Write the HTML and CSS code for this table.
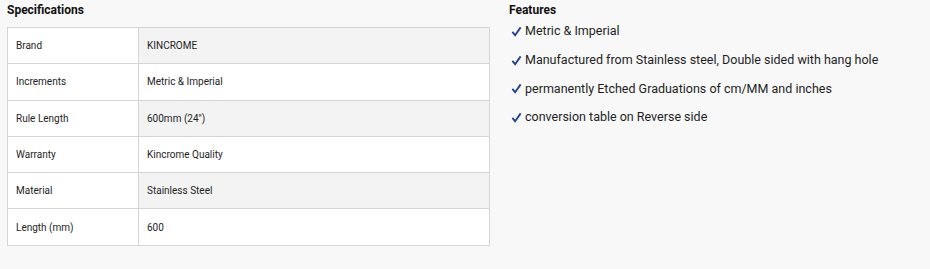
FILE: index.html
```html
<!DOCTYPE html>
<html lang="en">
<head>
    <meta charset="UTF-8">
    <meta name="viewport" content="width=device-width, initial-scale=1.0">
    <title>Product Specifications</title>
    <link rel="stylesheet" href="styles.css">
</head>
<body>
    <div class="product-info">
        <div class="specs">
            <h4 class="section-title">Specifications</h4>
            <table class="spec-table">
                <tr>
                    <td class="label">Brand</td>
                    <td class="value">KINCROME</td>
                </tr>
                <tr>
                    <td class="label">Increments</td>
                    <td class="value">Metric &amp; Imperial</td>
                </tr>
                <tr>
                    <td class="label">Rule Length</td>
                    <td class="value">600mm (24&quot;)</td>
                </tr>
                <tr>
                    <td class="label">Warranty</td>
                    <td class="value">Kincrome Quality</td>
                </tr>
                <tr>
                    <td class="label">Material</td>
                    <td class="value">Stainless Steel</td>
                </tr>
                <tr>
                    <td class="label">Length (mm)</td>
                    <td class="value">600</td>
                </tr>
            </table>
        </div>

        <div class="features">
            <h4 class="section-title">Features</h4>
            <ul class="feature-list">
                <li><svg class="tick" viewBox="0 0 12 12"><path d="M1.5 6.5 L4.5 10 L10.5 1.5"/></svg>Metric &amp; Imperial</li>
                <li><svg class="tick" viewBox="0 0 12 12"><path d="M1.5 6.5 L4.5 10 L10.5 1.5"/></svg>Manufactured from Stainless steel, Double sided with hang hole</li>
                <li><svg class="tick" viewBox="0 0 12 12"><path d="M1.5 6.5 L4.5 10 L10.5 1.5"/></svg>permanently Etched Graduations of cm/MM and inches</li>
                <li><svg class="tick" viewBox="0 0 12 12"><path d="M1.5 6.5 L4.5 10 L10.5 1.5"/></svg>conversion table on Reverse side</li>
            </ul>
        </div>
    </div>
</body>
</html>
```

FILE: styles.css
```css
body {
    margin: 0;
    font-family: Roboto, "Liberation Sans", sans-serif;
    background-color: #f8f8f8;
    color: #1e1e1e;
}

.product-info {
    display: flex;
    padding: 0 7px;
    gap: 19px;
}

.specs {
    width: 483px;
}

.section-title {
    margin: 3px 0 0;
    font-size: 12px;
    font-weight: bold;
    line-height: 14px;
    color: #111;
}

.spec-table {
    width: 100%;
    margin-top: 10px;
    border-collapse: collapse;
    background-color: white;
    font-size: 10px;
}

.spec-table td {
    height: 35.3px;
    padding: 0 8px;
    border: 1px solid #d5d5d5;
}

.spec-table .label {
    width: 114px;
}

.spec-table tr:nth-child(odd) .value {
    background-color: #f3f3f3;
}

.feature-list {
    list-style: none;
    margin: 0;
    padding: 0;
    font-size: 12.5px;
}

.feature-list li {
    display: flex;
    align-items: center;
    height: 28.7px;
    line-height: 16px;
}

.tick {
    width: 11px;
    height: 11px;
    margin: 0 3px 0 2px;
    fill: none;
    stroke: #1f3f91;
    stroke-width: 2;
}
```
